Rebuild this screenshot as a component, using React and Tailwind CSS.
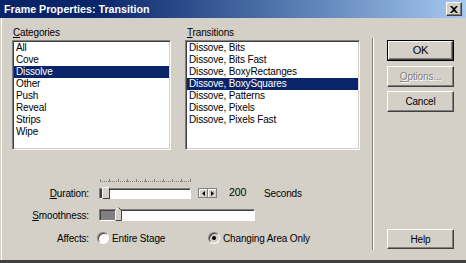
import React from "react";

const categories = ["All", "Cove", "Dissolve", "Other", "Push", "Reveal", "Strips", "Wipe"];
const transitions = [
  "Dissove, Bits",
  "Dissove, Bits Fast",
  "Dissove, BoxyRectanges",
  "Dissove, BoxySquares",
  "Dissove, Patterns",
  "Dissove, Pixels",
  "Dissove, Pixels Fast",
];

const ListBox = ({ items, selected }) => (
  <div className="h-[110px] bg-white border border-t-[#808080] border-l-[#808080] border-r-white border-b-white shadow-[inset_1px_1px_0_#404040,inset_-1px_-1px_0_#d4d0c8] p-[1px] overflow-hidden">
    {items.map((item) => (
      <div
        key={item}
        className={
          item === selected
            ? "h-[12px] leading-[12px] pl-[2px] bg-[#0a246a] text-white"
            : "h-[12px] leading-[12px] pl-[2px] text-black"
        }
      >
        {item}
      </div>
    ))}
  </div>
);

const Button = ({ children, isDefault, disabled, className = "" }) => (
  <div className={`${isDefault ? "border border-black" : ""} ${className}`}>
    <div
      className={`h-full flex items-center justify-center border border-t-white border-l-white border-r-[#404040] border-b-[#404040] shadow-[inset_-1px_-1px_0_#808080] ${
        disabled ? "text-[#808080] [text-shadow:1px_1px_0_#fff]" : "text-black"
      }`}
    >
      {children}
    </div>
  </div>
);

const Radio = ({ checked }) => (
  <div
    className={`relative w-[12px] h-[12px] rounded-full border border-t-[#808080] border-l-[#808080] border-r-white border-b-white shadow-[inset_1px_1px_0_#404040] ${
      checked ? "bg-[#d4d0c8]" : "bg-white"
    }`}
  >
    {checked && <div className="absolute left-[3px] top-[3px] w-[4px] h-[4px] rounded-full bg-black" />}
  </div>
);

const Ticks = () => (
  <svg width="92" height="4" className="block">
    {Array.from({ length: 46 }).map((_, i) => (
      <rect key={i} x={i * 2} y={2} width={1} height={1} fill="#808080" />
    ))}
    {Array.from({ length: 11 }).map((_, i) => (
      <rect key={"t" + i} x={i * 9} y={0} width={1} height={3} fill="#808080" />
    ))}
  </svg>
);

const U = ({ children }) => <span className="underline underline-offset-1">{children}</span>;

export default function App() {
  return (
    <div className="w-[466px] h-[263px] bg-[#d4d0c8] flex flex-col overflow-hidden font-['Liberation_Sans',Arial,sans-serif] text-[10px] tracking-[-0.15px] border-b-[3px] border-b-[#404040]">
      {/* title bar */}
      <div className="h-[18px] shrink-0 flex items-center pl-[4px] pr-[4px] bg-linear-to-r from-[#0a246a] from-20% to-[#a6caf0]">
        <span className="text-white font-bold text-[10.7px] tracking-normal">Frame Properties: Transition</span>
        <div className="ml-auto w-[16px] h-[14px] flex items-center justify-center bg-[#d4d0c8] border border-t-white border-l-white border-r-[#404040] border-b-[#404040] shadow-[inset_-1px_-1px_0_#808080]">
          <svg width="8" height="7" viewBox="0 0 8 7">
            <path d="M0 0h2l2 2 2-2h2L5 3.5 8 7H6L4 5 2 7H0l3-3.5z" fill="#000" />
          </svg>
        </div>
      </div>

      {/* body */}
      <div className="flex-1 flex ml-[1px] border-l border-white">
        <div className="w-[358px] pl-[10px] pt-[9px] flex flex-col">
          <div className="flex gap-[14px]">
            <div className="w-[159px]">
              <div className="h-[13px] leading-[12px] pl-[1px]">
                <U>C</U>ategories
              </div>
              <ListBox items={categories} selected="Dissolve" />
            </div>
            <div className="w-[175px]">
              <div className="h-[13px] leading-[12px] pl-[2px]">
                <U>T</U>ransitions
              </div>
              <ListBox items={transitions} selected="Dissove, BoxySquares" />
            </div>
          </div>

          <div className="mt-[29px] ml-[88px]">
            <Ticks />
          </div>

          {/* duration */}
          <div className="mt-[3px] h-[14px] flex items-center">
            <div className="w-[77px] text-right">
              <U>D</U>uration:
            </div>
            <div className="ml-[10px] relative w-[92px] h-[11px] bg-white border border-t-[#808080] border-l-[#808080] border-r-white border-b-white shadow-[inset_1px_1px_0_#404040]">
              <div className="absolute left-[1px] top-[1px] w-[2px] h-[8px] bg-[#404040]" />
              <div className="absolute left-[2px] top-[-2px] w-[8px] h-[12px] bg-[#d4d0c8] rounded-t-[2px] border border-t-white border-l-white border-r-[#404040] border-b-[#404040]" />
            </div>
            <div className="ml-[7px] flex border border-[#808080] bg-[#808080] gap-[1px]">
              <div className="w-[8px] h-[8px] bg-[#d4d0c8] border-t border-l border-white flex items-center justify-center">
                <svg width="3" height="5"><path d="M3 0v5L0 2.5z" fill="#000" /></svg>
              </div>
              <div className="w-[8px] h-[8px] bg-[#d4d0c8] border-t border-l border-white flex items-center justify-center">
                <svg width="3" height="5"><path d="M0 0v5l3-2.5z" fill="#000" /></svg>
              </div>
            </div>
            <div className="ml-[12px] w-[35px] text-[10.5px]">200</div>
            <div>Seconds</div>
          </div>

          {/* smoothness */}
          <div className="mt-[8px] h-[14px] flex items-center">
            <div className="w-[77px] text-right">
              <U>S</U>moothness:
            </div>
            <div className="ml-[10px] relative w-[156px] h-[12px] bg-white border border-t-[#808080] border-l-[#808080] border-r-white border-b-white shadow-[inset_1px_1px_0_#404040]">
              <div className="absolute left-[1px] top-[1px] w-[14px] h-[9px] bg-[#808080]" />
              <svg width="7" height="14" className="absolute left-[15px] top-[-3px]">
                <path d="M0.5 13.5V3.5L3.5 0.5L6.5 3.5V13.5Z" fill="#d4d0c8" />
                <path d="M0.5 13.5V3.5L3.5 0.5" fill="none" stroke="#fff" />
                <path d="M3.5 0.5L6.5 3.5V13.5H0.5" fill="none" stroke="#404040" />
              </svg>
            </div>
          </div>

          {/* affects */}
          <div className="mt-[9px] h-[14px] flex items-center">
            <div className="w-[77px] text-right">Affects:</div>
            <div className="ml-[8px] w-[111px] flex items-center">
              <Radio />
              <span className="ml-[3px]">Entire Stage</span>
            </div>
            <div className="flex items-center">
              <Radio checked />
              <span className="ml-[3px]">Changing Area Only</span>
            </div>
          </div>
        </div>

        {/* separator */}
        <div className="ml-[12px] mt-[20px] w-[2px] h-[212px] border-l border-l-[#808080] border-r border-r-white" />

        {/* buttons */}
        <div className="ml-[13px] w-[67px] pt-[22px] pb-[11px] flex flex-col">
          <Button isDefault className="h-[21px] text-[11px]">OK</Button>
          <Button disabled className="mt-[5px] h-[21px]">
            <U>O</U>ptions...
          </Button>
          <Button className="mt-[4px] h-[21px]">Cancel</Button>
          <Button className="mt-auto h-[20px]">Help</Button>
        </div>
      </div>
    </div>
  );
}
